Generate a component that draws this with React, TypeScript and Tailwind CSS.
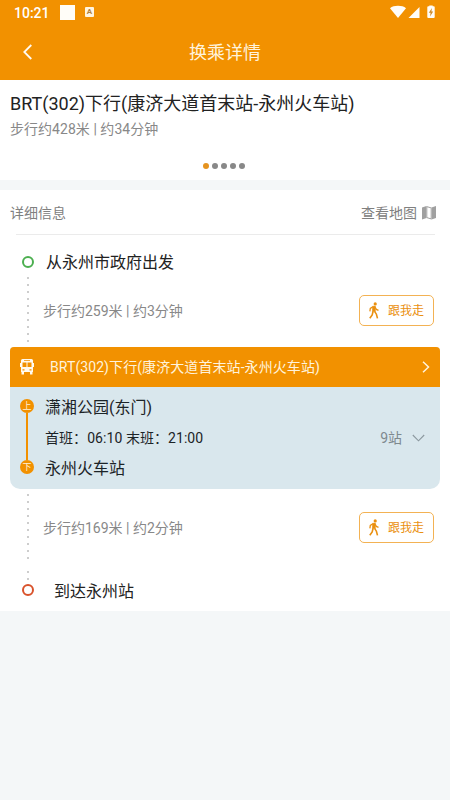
import React from 'react';

const FONT = "font-[Roboto,'Noto_Sans_CJK_SC',sans-serif]";

const StatusBar: React.FC = () => (
    <div className="flex h-6 items-center justify-between pl-[14px] pr-[14px] text-white">
        <div className="flex items-center">
            <span className="w-[46px] pt-px text-[14px] font-medium leading-6">10:21</span>
            <span className="h-[15px] w-[15px] bg-[#fffdf8]" />
            <span className="ml-[10px] flex h-[10px] w-[9px] items-center justify-center rounded-[1px] bg-[#fff4de] text-[8px] font-bold leading-none text-[#b08040]">A</span>
        </div>
        <svg width="46" height="14" viewBox="0 0 46 14" fill="#fffdf8">
            <path d="M0 3.2C2 1.6 4.6.8 8 .8s6 .8 8 2.4L8 13z" />
            <path d="M29.5 2v11h-11z" />
            <path d="M39.3 1.2V.4h3.400v.8h1q1 0 1 1v9.800q0 1-1 1h-5.400q-1 0-1-1V2.200q0-1 1-1z" />
            <path d="M42 3l-3.200 4.800h1.800l-.6 3.700 3.200-4.900h-1.800z" fill="#cf8a26" />
        </svg>
    </div>
);

const Dots: React.FC<{ count: number }> = ({ count }) => (
    <div className="flex w-[2px] flex-col gap-[5px]">
        {Array.from({ length: count }, (_, i) => (
            <span key={i} className="h-[2px] w-[2px] rounded-full bg-[#bdbdbd]" />
        ))}
    </div>
);

const WalkIcon: React.FC = () => (
    <svg width="10" height="17" viewBox="0 0 10 17" fill="none" stroke="currentColor">
        <circle cx="6.200" cy="1.900" r="1.600" fill="currentColor" stroke="none" />
        <path d="M3.600 4.300 6.400 4.100 6.300 9.600 3.400 9.800z" fill="currentColor" strokeWidth=".6" strokeLinejoin="round" />
        <path d="M3.800 4.800 1.300 6.500.9 9.300M6.200 5.200 7.300 7.400 9.500 8.400" strokeWidth="1.300" />
        <path d="M4 9.500 3.200 13 .8 16.300M5.600 9.300 7.400 12.200 8.500 16.400" strokeWidth="1.600" />
    </svg>
);

const WalkButton: React.FC = () => (
    <button className="flex h-[31px] w-[75px] items-center rounded-[5px] border border-solid border-[#f3b253] pl-[9px] text-[#ea9010]">
        <WalkIcon />
        <span className="ml-[9px] pt-[2px] text-[12px] leading-4">跟我走</span>
    </button>
);

const WalkInfo: React.FC<{ text: string }> = ({ text }) => (
    <div className="flex flex-1 items-center justify-between pl-[13px] pr-4">
        <span className="pt-px text-[14px] leading-5 text-[#888888]">{text}</span>
        <WalkButton />
    </div>
);

const MapIcon: React.FC = () => (
    <svg className="ml-[5px]" width="14" height="14" viewBox="0 0 14 14" fill="#a0a0a0">
        <path d="M0 1.500 4.500 0v12L0 13.500z" />
        <path d="M4.500 0 9.500 1.500v12L4.500 12zM5.300 1.300v10l3.400 1v-10z" fillRule="evenodd" />
        <path d="M9.500 1.500 14 0v12l-4.500 1.500z" />
    </svg>
);

const BusIcon: React.FC = () => (
    <svg width="14" height="16" viewBox="0 0 14 16" fill="none">
        <path d="M2.500 0h9q1.500 0 1.500 1.500V13H1V1.500Q1 0 2.500 0z" fill="#fffaf0" />
        <path d="M0 4h1v4H0zM13 4h1v4h-1zM1.500 13H4v2.500H1.500zM10 13h2.500v2.500H10z" fill="#fffaf0" />
        <path d="M2.500 3.500h4v4.500h-4zM7.500 3.500h4v4.500h-4zM4 1.200h6v.8H4zM2.500 10.200h2v1.300h-2zM9.500 10.200h2v1.300h-2z" fill="#f29100" />
    </svg>
);

const BusCard: React.FC = () => (
    <div className="mx-[10px] h-[142px] overflow-hidden rounded-t-[4px] rounded-b-[10px] bg-[#d9e7ed]">
        <div className="flex h-10 items-center bg-[#f29100] pl-[10px] pr-[10px] text-[#fff3dc]">
            <BusIcon />
            <span className="ml-4 flex-1 text-[14px] leading-5 tracking-[0.08px]">BRT(302)下行(康济大道首末站-永州火车站)</span>
            <svg width="8" height="12" viewBox="0 0 8 12" fill="none" stroke="currentColor" strokeWidth="1.5">
                <path d="M1 .8 6.500 6 1 11.200" />
            </svg>
        </div>
        <div className="flex pl-[10px] pt-[12px]">
            <div className="flex w-[14px] flex-col items-center text-[9px] leading-none text-[#fff0d5]">
                <span className="flex h-[14px] w-[14px] items-center justify-center rounded-full bg-[#f29100]">上</span>
                <span className="h-[47px] w-[2px] bg-[#f29100]" />
                <span className="flex h-[14px] w-[14px] items-center justify-center rounded-full bg-[#f29100]">下</span>
            </div>
            <div className="-mt-px ml-[11px] flex-1 text-[16px] leading-5 text-[#1c2327]">
                <div>潇湘公园(东门)</div>
                <div className="mb-[11px] mt-[9px] flex h-[21px] items-center text-[14px]">
                    <span className="flex-1 tracking-[0.06px]">首班：06:10 末班：21:00</span>
                    <span className="text-[#7e898f]">9站</span>
                    <svg className="ml-[10px] mr-[15px]" width="13" height="8" viewBox="0 0 13 8" fill="none" stroke="#8b989f" strokeWidth="1.1">
                        <path d="M.8 1 6.500 6.800 12.200 1" />
                    </svg>
                </div>
                <div>永州火车站</div>
            </div>
        </div>
    </div>
);

export default function App() {
    return (
        <div className={`flex h-[800px] w-[450px] flex-col overflow-hidden bg-[#f4f7f8] ${FONT}`}>
            <header className="h-20 bg-[#f29100]">
                <StatusBar />
                <div className="flex h-14 items-center pl-[23px] pr-8 text-[#fff3dc]">
                    <svg width="9" height="16" viewBox="0 0 9 16" fill="none" stroke="#fffaf0" strokeWidth="1.8">
                        <path d="M8.300 1 1.300 8l7 7" />
                    </svg>
                    <h1 className="flex-1 pt-[2px] text-center text-[18px] font-normal leading-6">换乘详情</h1>
                </div>
            </header>

            {/* Route summary */}
            <section className="h-[100px] bg-white px-[10px] pt-3">
                <h2 className="text-[18px] leading-[23px] text-[#222222]">BRT(302)下行(康济大道首末站-永州火车站)</h2>
                <p className="mt-1 text-[14px] leading-5 tracking-[0.04px] text-[#888888]">步行约428米 | 约34分钟</p>
                <div className="mt-[24px] flex justify-center gap-[3px] pr-[3px]">
                    <span className="h-[6px] w-[6px] rounded-full bg-[#e59320]" />
                    <span className="h-[6px] w-[6px] rounded-full bg-[#888888]" />
                    <span className="h-[6px] w-[6px] rounded-full bg-[#888888]" />
                    <span className="h-[6px] w-[6px] rounded-full bg-[#888888]" />
                    <span className="h-[6px] w-[6px] rounded-full bg-[#888888]" />
                </div>
            </section>

            {/* Route detail */}
            <section className="mt-[10px] h-[421px] bg-white">
                <div className="flex h-11 items-center pl-[10px] pr-[14px] pt-[2px] text-[14px] text-[#808080]">
                    <span className="flex-1">详细信息</span>
                    <span>查看地图</span>
                    <MapIcon />
                </div>
                <div className="ml-4 mr-[15px] h-px bg-[#ebebeb]" />

                <div className="flex h-[112px]">
                    <div className="flex w-[30px] flex-col items-end">
                        <span className="-mr-[4px] mt-[21px] h-[12px] w-[12px] rounded-full border-2 border-[#4caf50]" />
                        <div className="mr-[1px] mt-[9px]">
                            <Dots count={10} />
                        </div>
                    </div>
                    <div className="flex flex-1 flex-col">
                        <div className="h-[46px] pl-4 pt-[18px] text-[16px] leading-5 text-[#222222]">从永州市政府出发</div>
                        <div className="flex h-[58px]">
                            <WalkInfo text="步行约259米 | 约3分钟" />
                        </div>
                    </div>
                </div>

                <BusCard />

                <div className="flex h-[122px]">
                    <div className="flex w-[30px] flex-col items-end pt-[5px]">
                        <div className="mr-[1px]">
                            <Dots count={10} />
                        </div>
                        <div className="mr-[1px] mt-[12px]">
                            <Dots count={2} />
                        </div>
                        <span className="-mr-[4px] mt-1 h-[12px] w-[12px] rounded-full border-2 border-[#d9532c]" />
                    </div>
                    <div className="flex flex-1 flex-col">
                        <div className="flex h-[76px]">
                            <WalkInfo text="步行约169米 | 约2分钟" />
                        </div>
                        <div className="pl-6 pt-[17px] text-[16px] leading-5 text-[#222222]">到达永州站</div>
                    </div>
                </div>
            </section>
        </div>
    );
}
